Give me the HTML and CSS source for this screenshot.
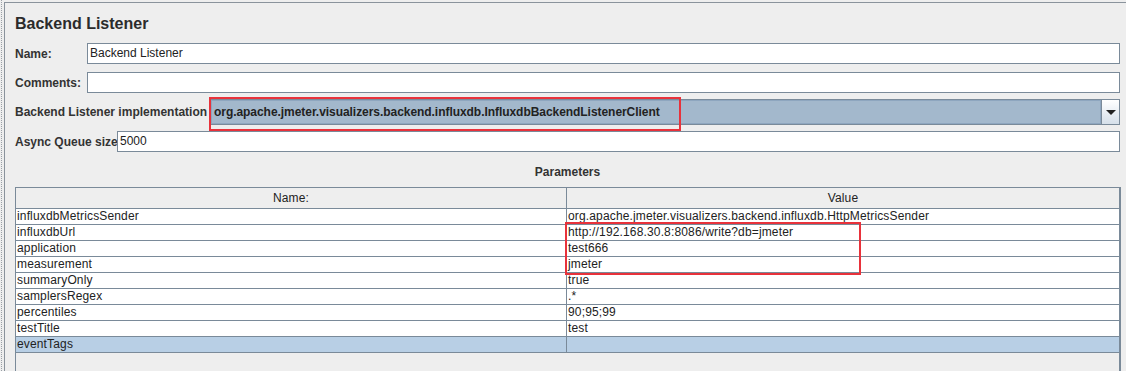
FILE: index.html
```html
<!DOCTYPE html>
<html>
<head>
<meta charset="utf-8">
<link rel="stylesheet" href="styles.css">
</head>
<body>
<div class="frame">
  <div class="gutter"></div>
  <div class="panel">
    <div class="title">Backend Listener</div>
    <div class="row r-name">
      <div class="label w-name">Name:</div>
      <div class="field">Backend Listener</div>
    </div>
    <div class="row r-comments">
      <div class="label w-name">Comments:</div>
      <div class="field"></div>
    </div>
    <div class="row r-combo">
      <div class="label w-impl">Backend Listener implementation</div>
      <div class="combo">
        <div class="combo-value">org.apache.jmeter.visualizers.backend.influxdb.InfluxdbBackendListenerClient</div>
        <div class="combo-btn"><span class="arrow"></span></div>
      </div>
    </div>
    <div class="row r-async">
      <div class="label w-async">Async Queue size</div>
      <div class="field">5000</div>
    </div>
    <div class="params-title">Parameters</div>
    <div class="grid">
      <div class="grow head"><div class="cell">Name:</div><div class="cell">Value</div></div>
      <div class="grow"><div class="cell">influxdbMetricsSender</div><div class="cell">org.apache.jmeter.visualizers.backend.influxdb.HttpMetricsSender</div></div>
      <div class="grow"><div class="cell">influxdbUrl</div><div class="cell">http://192.168.30.8:8086/write?db=jmeter</div></div>
      <div class="grow"><div class="cell">application</div><div class="cell">test666</div></div>
      <div class="grow"><div class="cell">measurement</div><div class="cell">jmeter</div></div>
      <div class="grow"><div class="cell">summaryOnly</div><div class="cell">true</div></div>
      <div class="grow"><div class="cell">samplersRegex</div><div class="cell">.*</div></div>
      <div class="grow"><div class="cell">percentiles</div><div class="cell">90;95;99</div></div>
      <div class="grow"><div class="cell">testTitle</div><div class="cell">test</div></div>
      <div class="grow sel"><div class="cell">eventTags</div><div class="cell"></div></div>
    </div>
  </div>
</div>
<div class="mark mark-combo"></div>
<div class="mark mark-table"></div>
</body>
</html>
```
FILE: styles.css
```css
html, body {
  margin: 0;
  padding: 0;
  height: 100%;
  overflow: hidden;
}
body {
  background: #eeeeee;
  font-family: "Liberation Sans", Arial, sans-serif;
  font-size: 12px;
  color: #333333;
  position: relative;
}
.frame {
  display: flex;
  height: 371px;
}
.gutter {
  flex: none;
  box-sizing: border-box;
  border-left: 1px dotted #9aa0a6;
  margin-left: 1px;
  width: 3px;
}
.panel {
  flex: 1;
  margin-top: 2px;
  border-top: 1px solid #8a939c;
  border-left: 1px solid #8a939c;
  padding: 11px 6px 0 10px;
  display: flex;
  flex-direction: column;
  min-width: 0;
}
.title {
  font-size: 16px;
  font-weight: bold;
  line-height: 20px;
  height: 20px;
  color: #2b2b2b;
}
.row {
  display: flex;
  align-items: center;
}
.r-name { margin-top: 9px; height: 21px; }
.r-comments { margin-top: 8px; height: 21px; }
.r-combo { margin-top: 6px; height: 26px; }
.r-async { margin-top: 6px; height: 21px; }
.label {
  font-weight: bold;
  flex: none;
  white-space: nowrap;
  color: #333333;
}
.w-name { width: 72px; }
.w-impl { width: 195px; }
.w-async { width: 102px; }
.field {
  flex: 1;
  height: 21px;
  box-sizing: border-box;
  background: #ffffff;
  border: 1px solid #7a8a99;
  padding-left: 2px;
  line-height: 19px;
  color: #222222;
}
.combo {
  flex: 1;
  height: 26px;
  display: flex;
  box-sizing: border-box;
  border: 1px solid #7a8a99;
}
.combo-value {
  flex: 1;
  background: #a3b8cc;
  border: 1px solid #8ea6bf;
  box-sizing: border-box;
  padding-left: 2px;
  line-height: 22px;
  font-weight: bold;
  letter-spacing: -0.05px;
  color: #222222;
  white-space: nowrap;
  overflow: hidden;
}
.combo-btn {
  width: 17px;
  flex: none;
  background: linear-gradient(#ffffff, #d6e0ea);
  border-left: 1px solid #7a8a99;
  display: flex;
  align-items: center;
  justify-content: center;
}
.arrow {
  width: 0;
  height: 0;
  border-left: 5px solid transparent;
  border-right: 5px solid transparent;
  border-top: 5px solid #222222;
  margin-top: 1px;
}
.params-title {
  margin-top: 12px;
  height: 16px;
  line-height: 16px;
  text-align: center;
  font-weight: bold;
  color: #333333;
}
.grid {
  margin-top: 7px;
  flex: 1;
  border-left: 1px solid #7a8a99;
  border-right: 2px solid #7a8a99;
  margin-right: -1px;
  display: flex;
  flex-direction: column;
}
.grow {
  display: grid;
  grid-template-columns: 551px 1fr;
  height: 16px;
  box-sizing: border-box;
  border-bottom: 1px solid #7a8a99;
  background: #ffffff;
}
.grow.head {
  height: 22px;
  border-top: 1px solid #7a8a99;
  background: #eeeeee;
}
.grow.head .cell {
  text-align: center;
  line-height: 20px;
  padding-left: 0;
}
.grow.sel { background: #b8cfe5; }
.cell {
  border-right: 1px solid #7a8a99;
  padding-left: 1px;
  line-height: 15px;
  white-space: nowrap;
  overflow: hidden;
  letter-spacing: 0.15px;
  color: #222222;
}
.cell:last-child { border-right: none; }
.mark {
  position: absolute;
  border: 2px solid #e8323b;
  box-sizing: border-box;
}
.mark-combo { left: 209px; top: 97px; width: 472px; height: 34px; }
.mark-table { left: 565px; top: 222px; width: 296px; height: 53px; }
```
